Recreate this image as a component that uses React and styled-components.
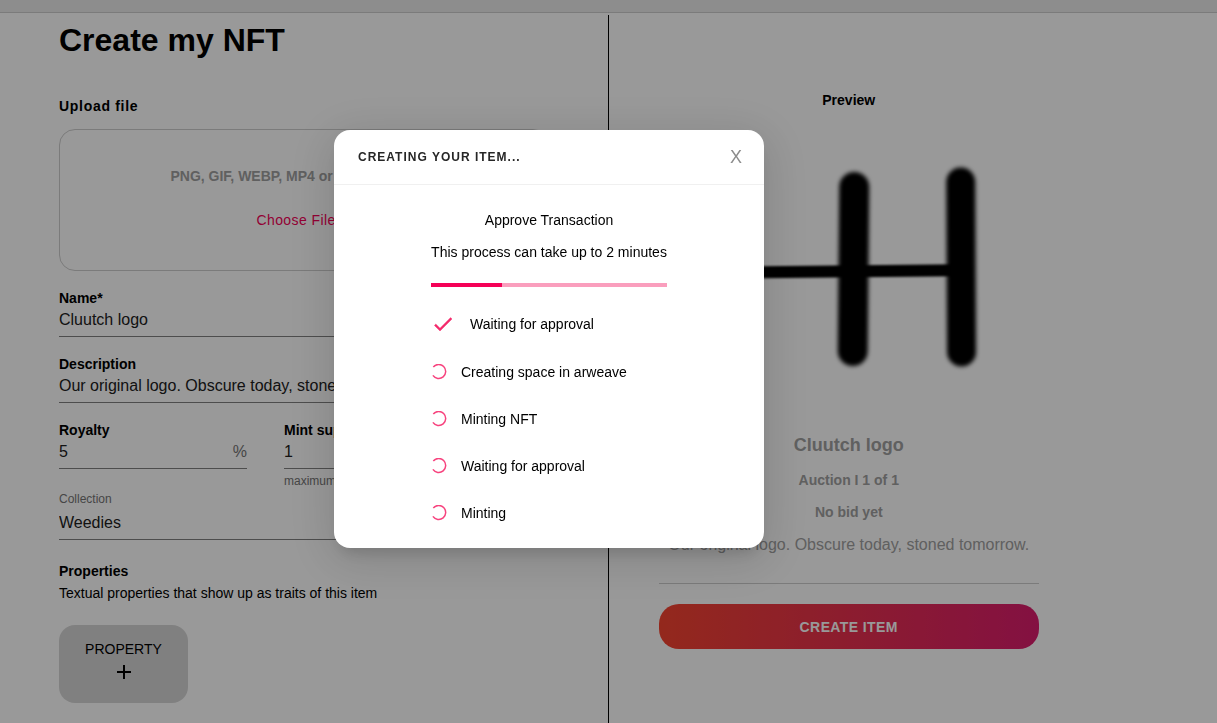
import React from "react"
import styled, { createGlobalStyle } from "styled-components"

const GlobalStyle = createGlobalStyle`
  *, *::before, *::after {
    box-sizing: border-box;
  }
  body {
    margin: 0;
    background: #fff;
    color: #000;
    font-family: "Liberation Sans", Arial, sans-serif;
    font-size: 14px;
    line-height: 16px;
  }
  button, input, select {
    font-family: inherit;
  }
`

const Page = styled.div`
  display: flex;
  flex-direction: column;
  height: 100vh;
  overflow: hidden;
`

const TopBar = styled.header`
  flex: none;
  height: 13px;
  background: #ebebeb;
  border-bottom: 1px solid #cdcdcd;
`

const Columns = styled.main`
  flex: 1;
  min-height: 0;
  display: grid;
  grid-template-columns: 1fr 1fr;
  padding-top: 2px;
`

const FormColumn = styled.form`
  padding: 5px 59px 0;
  border-right: 1px solid #000;
`

const PreviewColumn = styled.section`
  display: flex;
  flex-direction: column;
  align-items: center;
  padding: 77px 178px 0 50px;
`

const Title = styled.h1`
  margin: 0 0 38px;
  font-size: 32px;
  line-height: 40px;
`

const UploadLabel = styled.h2`
  margin: 0 0 15px;
  font-size: 14px;
  line-height: 16px;
  letter-spacing: 0.05em;
`

const DropZone = styled.div`
  display: flex;
  flex-direction: column;
  align-items: center;
  height: 142px;
  padding-top: 38px;
  margin-bottom: 19px;
  border: 1px solid #cdcdcd;
  border-radius: 16px;
`

const DropHint = styled.p`
  margin: 0 0 28px;
  font-weight: bold;
  color: #a0a0a0;
`

const ChooseButton = styled.button`
  padding: 0 8px 0 0;
  border: 0;
  background: none;
  font-size: 14px;
  line-height: 16px;
  letter-spacing: 0.02857em;
  color: #f50057;
`

const FieldBox = styled.div`
  margin-bottom: 19px;
`

const FieldLabel = styled.label`
  display: block;
  font-size: ${(props) => (props.$small ? "12px" : "14px")};
  font-weight: ${(props) => (props.$small ? "normal" : "bold")};
  line-height: 16px;
  color: ${(props) => (props.$small ? "#757575" : "#000")};
`

const InputLine = styled.div`
  display: flex;
  align-items: center;
  height: 31px;
  padding-bottom: 2px;
  border-bottom: 1px solid #808080;
`

const Input = styled.input`
  flex: 1;
  min-width: 0;
  padding: 0;
  border: 0;
  outline: 0;
  background: none;
  font-size: 16px;
  color: #212121;
`

const Adornment = styled.span`
  font-size: 16px;
  color: #757575;
`

const Helper = styled.p`
  margin: 4px 0 0;
  font-size: 12px;
  color: #757575;
`

const FieldRow = styled.div`
  display: grid;
  grid-template-columns: 188px 188px;
  gap: 37px;
  margin-bottom: 2px;

  ${FieldBox} {
    margin-bottom: 0;
  }
`

const Select = styled.select`
  display: block;
  width: 100%;
  height: 33px;
  padding: 0 0 2px;
  border: 0;
  border-bottom: 1px solid #808080;
  appearance: none;
  background: none;
  font-size: 16px;
  color: #212121;
`

const SectionTitle = styled.h3`
  margin: 23px 0 6px;
  font-size: 14px;
  line-height: 16px;
`

const SectionText = styled.p`
  margin: 0 0 24px;
`

const PropertyButton = styled.button`
  display: flex;
  flex-direction: column;
  align-items: center;
  gap: 3px;
  width: 129px;
  height: 78px;
  padding: 16px 0 0;
  border: 0;
  border-radius: 16px;
  background: #d6d6d6;
  font-size: 14px;
  line-height: 16px;
  color: #000;
`

const PreviewTitle = styled.h2`
  margin: 0;
  font-size: 14px;
  line-height: 16px;
`

const Artwork = styled.svg`
  display: block;
  width: 100%;
  height: 327px;
`

const ItemName = styled.h3`
  margin: 0 0 17px;
  font-size: 18px;
  line-height: 20px;
  color: #a0a0a0;
`

const ItemMeta = styled.p`
  margin: 0 0 16px;
  font-weight: bold;
  color: #a0a0a0;
`

const ItemDescription = styled.p`
  margin: 0;
  font-size: 16px;
  line-height: 18px;
  white-space: nowrap;
  color: #a0a0a0;
`

const Divider = styled.hr`
  width: 100%;
  margin: 29px 0 20px;
  border: 0;
  border-top: 1px solid #cdcdcd;
`

const CreateButton = styled.button`
  width: 100%;
  height: 45px;
  border: 0;
  border-radius: 20px;
  background: linear-gradient(90deg, #f64430, #dc1c6e);
  font-size: 14px;
  font-weight: bold;
  letter-spacing: 0.02857em;
  color: #fff;
`

const Overlay = styled.div`
  position: fixed;
  inset: 0;
  display: flex;
  justify-content: center;
  align-items: flex-start;
  padding: 130px 119px 0 0;
  background: rgba(0, 0, 0, 0.4);
`

const Dialog = styled.section`
  width: 430px;
  border-radius: 16px;
  background: #fff;
  box-shadow: 0 11px 15px -7px rgba(0, 0, 0, 0.16),
    0 9px 46px 8px rgba(0, 0, 0, 0.12);
`

const DialogHeader = styled.header`
  display: flex;
  justify-content: space-between;
  align-items: center;
  height: 55px;
  padding: 0 22px 0 24px;
  border-bottom: 1px solid #f0f0f0;
`

const DialogTitle = styled.h2`
  margin: 0;
  font-size: 12px;
  letter-spacing: 1px;
  color: #262626;
`

const CloseButton = styled.button`
  padding: 0;
  border: 0;
  background: none;
  font-size: 18px;
  line-height: 20px;
  color: #8c8c8c;
`

const DialogBody = styled.div`
  display: flex;
  flex-direction: column;
  width: 236px;
  margin: 0 auto;
  padding: 27px 0 23px;
`

const DialogText = styled.p`
  margin: 0 0 16px;
  text-align: center;
  white-space: nowrap;
`

const Track = styled.div`
  height: 4px;
  margin: 7px 0 25px;
  background: #fa9ebd;
`

const Bar = styled.div`
  height: 100%;
  background: #f50057;
`

const Steps = styled.ul`
  display: flex;
  flex-direction: column;
  gap: 23px;
  margin: 0;
  padding: 0;
  list-style: none;
`

const Step = styled.li`
  display: flex;
  align-items: center;
  gap: ${(props) => (props.$done ? "15px" : "14px")};
  height: 24px;
  margin-bottom: ${(props) => (props.$done ? "1px" : "0")};
`

const CheckIcon = () => (
  <svg width="24" height="24" viewBox="0 0 24 24" aria-hidden="true">
    <path
      d="M9 16.17 4.83 12l-1.42 1.41L9 19 21 7l-1.41-1.41z"
      fill="#f42b6c"
      stroke="#f42b6c"
      strokeWidth="0.4"
    />
  </svg>
)

const SpinnerIcon = () => (
  <svg width="16" height="16" viewBox="0 0 16 16" aria-hidden="true">
    <path
      d="M2.3 3A7 7 0 1 1 1.9 11.4"
      fill="none"
      stroke="#f7437e"
      strokeWidth="1.5"
    />
  </svg>
)

const PlusIcon = () => (
  <svg width="24" height="24" viewBox="0 0 24 24" aria-hidden="true">
    <path d="M19 13h-6v6h-2v-6H5v-2h6V5h2v6h6v2z" />
  </svg>
)

const Logo = () => (
  <Artwork viewBox="0 0 380 327" role="img" aria-label="Cluutch logo">
    <defs>
      <filter
        id="soft"
        filterUnits="userSpaceOnUse"
        x="0"
        y="0"
        width="380"
        height="327"
      >
        <feGaussianBlur stdDeviation="2" />
      </filter>
      <filter
        id="sharp"
        filterUnits="userSpaceOnUse"
        x="0"
        y="0"
        width="380"
        height="327"
      >
        <feGaussianBlur stdDeviation="1" />
      </filter>
    </defs>
    <path
      d="M60 164.5 L300 162.3"
      stroke="#000"
      strokeWidth="12"
      filter="url(#sharp)"
    />
    <g fill="none" stroke="#000" strokeLinecap="round" filter="url(#soft)">
      <path d="M195 79 L193.5 243" strokeWidth="30" />
      <path d="M301.5 74 L302.3 244" strokeWidth="29" />
    </g>
  </Artwork>
)

const Field = (props) => {
  const { id, label, value, unit, helper } = props;
  return (
    <FieldBox>
      <FieldLabel htmlFor={id}>{label}</FieldLabel>
      <InputLine>
        <Input id={id} defaultValue={value} />
        {unit && <Adornment>{unit}</Adornment>}
      </InputLine>
      {helper && <Helper>{helper}</Helper>}
    </FieldBox>
  )
}

const steps = [
  { text: "Waiting for approval", done: true },
  { text: "Creating space in arweave" },
  { text: "Minting NFT" },
  { text: "Waiting for approval" },
  { text: "Minting" },
]

const MintDialog = ({ progress }) => (
  <Overlay>
    <Dialog role="dialog" aria-labelledby="dialog-title">
      <DialogHeader>
        <DialogTitle id="dialog-title">CREATING YOUR ITEM...</DialogTitle>
        <CloseButton type="button" aria-label="Close">X</CloseButton>
      </DialogHeader>
      <DialogBody>
        <DialogText>Approve Transaction</DialogText>
        <DialogText>This process can take up to 2 minutes</DialogText>
        <Track role="progressbar" aria-valuenow={progress}>
          <Bar style={{ width: `${progress}%` }} />
        </Track>
        <Steps>
          {steps.map((step, i) => (
            <Step key={i} $done={step.done}>
              {step.done ? <CheckIcon /> : <SpinnerIcon />}
              {step.text}
            </Step>
          ))}
        </Steps>
      </DialogBody>
    </Dialog>
  </Overlay>
)

const App = () => (
  <>
    <GlobalStyle />
    <Page>
      <TopBar />
      <Columns>
        <FormColumn>
          <Title>Create my NFT</Title>
          <UploadLabel>Upload file</UploadLabel>
          <DropZone>
            <DropHint>PNG, GIF, WEBP, MP4 or MP3 Max 30mb</DropHint>
            <ChooseButton type="button">Choose Files</ChooseButton>
          </DropZone>
          <Field id="name" label="Name*" value="Cluutch logo" />
          <Field
            id="description"
            label="Description"
            value="Our original logo. Obscure today, stoned tomorrow."
          />
          <FieldRow>
            <Field id="royalty" label="Royalty" value="5" unit="%" />
            <Field
              id="supply"
              label="Mint supply"
              value="1"
              helper="maximum"
            />
          </FieldRow>
          <FieldLabel htmlFor="collection" $small>Collection</FieldLabel>
          <Select id="collection" defaultValue="Weedies">
            <option>Weedies</option>
          </Select>
          <SectionTitle>Properties</SectionTitle>
          <SectionText>
            Textual properties that show up as traits of this item
          </SectionText>
          <PropertyButton type="button">
            PROPERTY
            <PlusIcon />
          </PropertyButton>
        </FormColumn>
        <PreviewColumn>
          <PreviewTitle>Preview</PreviewTitle>
          <Logo />
          <ItemName>Cluutch logo</ItemName>
          <ItemMeta>Auction I 1 of 1</ItemMeta>
          <ItemMeta>No bid yet</ItemMeta>
          <ItemDescription>
            Our original logo. Obscure today, stoned tomorrow.
          </ItemDescription>
          <Divider />
          <CreateButton type="button">CREATE ITEM</CreateButton>
        </PreviewColumn>
      </Columns>
    </Page>
    <MintDialog progress={30} />
  </>
)

export default App
